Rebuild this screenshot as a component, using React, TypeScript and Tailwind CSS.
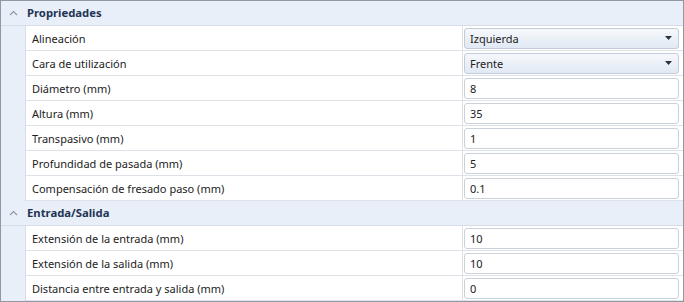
import React from "react";

type Row = { label: string; value: string; combo?: boolean };

const sections: { title: string; rows: Row[] }[] = [
  {
    title: "Propriedades",
    rows: [
      { label: "Alineación", value: "Izquierda", combo: true },
      { label: "Cara de utilización", value: "Frente", combo: true },
      { label: "Diámetro (mm)", value: "8" },
      { label: "Altura (mm)", value: "35" },
      { label: "Transpasivo (mm)", value: "1" },
      { label: "Profundidad de pasada (mm)", value: "5" },
      { label: "Compensación de fresado paso (mm)", value: "0.1" },
    ],
  },
  {
    title: "Entrada/Salida",
    rows: [
      { label: "Extensión de la entrada (mm)", value: "10" },
      { label: "Extensión de la salida (mm)", value: "10" },
      { label: "Distancia entre entrada y salida (mm)", value: "0" },
    ],
  },
];

function Chevron() {
  return (
    <svg width="9" height="6" viewBox="0 0 9 6" className="block">
      <path d="M1 5 L4.5 1.5 L8 5" fill="none" stroke="#8a96a3" strokeWidth="1.1" />
    </svg>
  );
}

function Arrow() {
  return (
    <svg width="7" height="4" viewBox="0 0 7 4" className="block">
      <path d="M0 0 H7 L3.5 4 Z" fill="#2a3440" />
    </svg>
  );
}

export default function App() {
  return (
    <div
      className="w-[684px] h-[302px] border border-[#8f99a4] bg-white flex flex-col overflow-hidden text-[11px] text-[#222]"
      style={{ fontFamily: '"Noto Sans", "Open Sans", sans-serif' }}
    >
      {sections.map((s) => (
        <div key={s.title} className="flex flex-col">
          <div className="h-[25px] bg-[#e9eff8] border-b border-[#d6dde6] flex items-center">
            <div className="w-[24px] flex justify-center">
              <Chevron />
            </div>
            <span className="text-[11.3px] font-bold text-[#1e3556] leading-none pl-[2px]">{s.title}</span>
          </div>
          <div className="flex">
            <div className="w-[24px] shrink-0 bg-[#e9eff8]" />
            <div className="flex-1 flex flex-col border-l border-[#d6dde6]">
              {s.rows.map((r) => (
                <div key={r.label} className="h-[25px] flex border-b border-[#dde2e8]">
                  <div className="w-[437px] shrink-0 border-r border-[#dde2e8] flex items-center pl-[6px] leading-none">
                    {r.label}
                  </div>
                  <div className="flex-1 flex items-center pl-[1px] pr-[4px]">
                    {r.combo ? (
                      <div className="h-[21px] w-full rounded-[3px] border border-[#c3ccd8] bg-gradient-to-b from-[#f6f8fb] to-[#e1e9f4] flex items-center justify-between pl-[5px] pr-[6px]">
                        <span className="leading-none">{r.value}</span>
                        <Arrow />
                      </div>
                    ) : (
                      <div className="h-[21px] w-full rounded-[3px] border border-[#cbd1d8] bg-white flex items-center pl-[5px]">
                        <span className="leading-none">{r.value}</span>
                      </div>
                    )}
                  </div>
                </div>
              ))}
            </div>
          </div>
        </div>
      ))}
    </div>
  );
}
